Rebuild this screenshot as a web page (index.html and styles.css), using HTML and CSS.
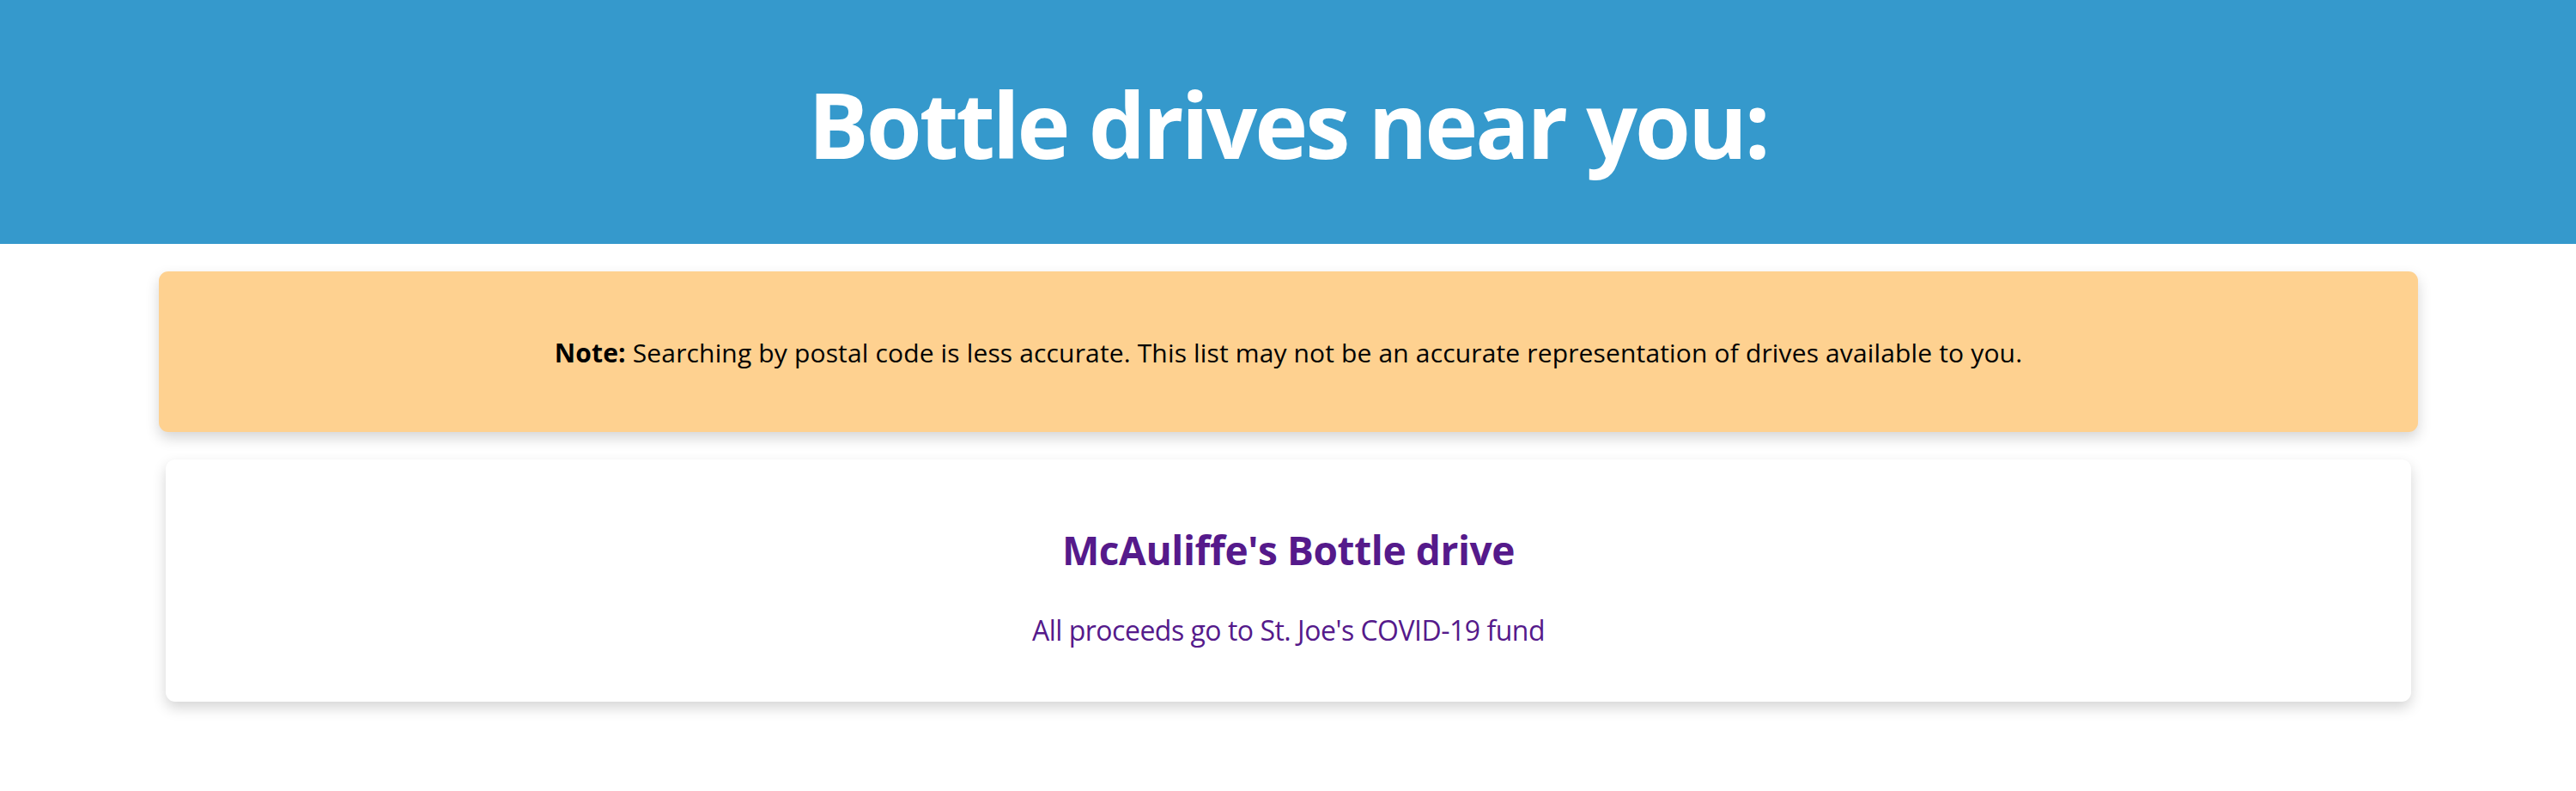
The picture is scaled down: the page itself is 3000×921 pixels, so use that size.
FILE: index.html
```html
<!DOCTYPE html>
<html lang="en">
<head>
<meta charset="utf-8">
<title>Bottle drives near you</title>
<link rel="stylesheet" href="styles.css">
</head>
<body>
<header class="hero">
  <h1 class="hero-title">Bottle drives near you:</h1>
</header>
<main class="list">
  <div class="note">
    <p class="note-text"><strong>Note:</strong> Searching by postal code is less accurate. This list may not be an accurate representation of drives available to you.</p>
  </div>
  <a class="card" href="#">
    <h2 class="card-title">McAuliffe's Bottle drive</h2>
    <p class="card-desc">All proceeds go to St. Joe's COVID-19 fund</p>
  </a>
</main>
</body>
</html>
```
FILE: styles.css
```css
html, body {
  margin: 0;
  padding: 0;
  background: #ffffff;
}
body {
  font-family: "Open Sans", "Noto Sans", sans-serif;
  color: #000;
}
.hero {
  background: #3599cc;
  padding: 82px 0 76px;
  text-align: center;
}
.hero-title {
  margin: 0;
  color: #ffffff;
  font-size: 105px;
  font-weight: 700;
  line-height: 1.2;
  letter-spacing: -3.1px;
}
.list {
  display: flex;
  flex-direction: column;
  gap: 32px;
  padding: 32px 184px 32px 185px;
}
.note {
  padding: 77px 24px 74px;
  background: #fed190;
  border-radius: 11px;
  box-shadow: 0 7px 16px rgba(0, 0, 0, 0.17);
  text-align: center;
}
.note-text {
  margin: 0;
  font-size: 30px;
  line-height: 1.2;
  letter-spacing: 0.15px;
}
.card {
  margin: 0 8px;
  padding: 78px 24px 64px;
  background: #ffffff;
  border-radius: 11px;
  box-shadow: 0 7px 16px rgba(0, 0, 0, 0.17);
  display: flex;
  flex-direction: column;
  align-items: center;
  text-decoration: none;
  color: #551a8b;
}
.card-title {
  margin: 0 0 46.6px;
  font-size: 46px;
  font-weight: 700;
  line-height: 1.2;
  letter-spacing: -0.4px;
}
.card-desc {
  margin: 0;
  font-size: 32px;
  line-height: 1.2;
  letter-spacing: -0.5px;
}
```
